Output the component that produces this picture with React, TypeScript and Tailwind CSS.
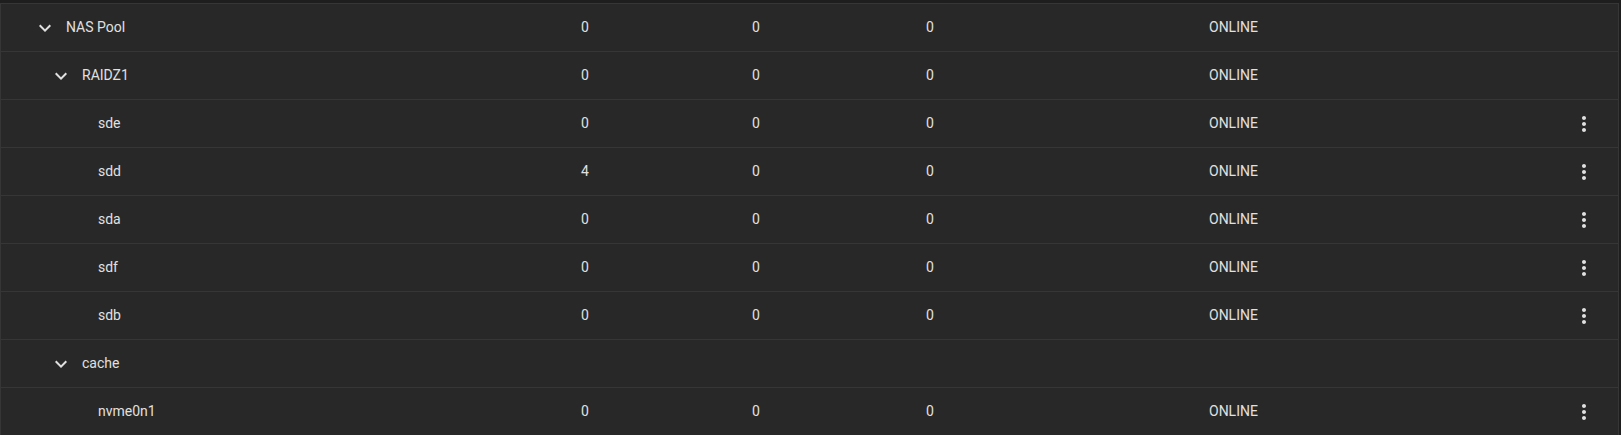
import React from 'react';

type Row = {
  name: string;
  level: number;
  expandable?: boolean;
  read?: string;
  write?: string;
  checksum?: string;
  status?: string;
  menu?: boolean;
};

const rows: Row[] = [
  { name: 'NAS Pool', level: 0, expandable: true, read: '0', write: '0', checksum: '0', status: 'ONLINE' },
  { name: 'RAIDZ1', level: 1, expandable: true, read: '0', write: '0', checksum: '0', status: 'ONLINE' },
  { name: 'sde', level: 2, read: '0', write: '0', checksum: '0', status: 'ONLINE', menu: true },
  { name: 'sdd', level: 2, read: '4', write: '0', checksum: '0', status: 'ONLINE', menu: true },
  { name: 'sda', level: 2, read: '0', write: '0', checksum: '0', status: 'ONLINE', menu: true },
  { name: 'sdf', level: 2, read: '0', write: '0', checksum: '0', status: 'ONLINE', menu: true },
  { name: 'sdb', level: 2, read: '0', write: '0', checksum: '0', status: 'ONLINE', menu: true },
  { name: 'cache', level: 1, expandable: true },
  { name: 'nvme0n1', level: 2, read: '0', write: '0', checksum: '0', status: 'ONLINE', menu: true },
];

const indent = ['pl-8', 'pl-12', 'pl-16'];

function Chevron() {
  return (
    <svg viewBox="0 0 24 24" className="w-6 h-6 fill-[#e0e0e0] shrink-0">
      <path d="M16.59 8.59L12 13.17 7.41 8.59 6 10l6 6 6-6z" />
    </svg>
  );
}

function MoreVert() {
  return (
    <svg viewBox="0 0 24 24" className="w-6 h-6 fill-[#e0e0e0]">
      <path d="M12 8c1.1 0 2-.9 2-2s-.9-2-2-2-2 .9-2 2 .9 2 2 2zm0 2c-1.1 0-2 .9-2 2s.9 2 2 2 2-.9 2-2-.9-2-2-2zm0 6c-1.1 0-2 .9-2 2s.9 2 2 2 2-.9 2-2-.9-2-2-2z" />
    </svg>
  );
}

export default function App() {
  return (
    <div className="w-full h-[435px] bg-[#1e1e1e] pt-[3px] pr-[2px] overflow-hidden font-['Roboto',sans-serif] text-[14px] text-[#e0e0e0]">
      <div className="bg-[#282828] border-l border-r border-[#363636]">
        {rows.map((r) => (
          <div
            key={r.name}
            className="grid grid-cols-[580px_171px_174px_283px_1fr] items-center h-12 border-t border-[#363636]"
          >
            {/* Name */}
            <div className={`flex items-center ${indent[r.level]}`}>
              {r.expandable ? <Chevron /> : <span className="w-6 h-6 shrink-0" />}
              <span className="ml-[9px]">{r.name}</span>
            </div>
            <div>{r.read}</div>
            <div>{r.write}</div>
            <div>{r.checksum}</div>
            {/* Status + actions */}
            <div className="flex items-center justify-between pr-[22px]">
              <span>{r.status}</span>
              {r.menu && <MoreVert />}
            </div>
          </div>
        ))}
      </div>
    </div>
  );
}
